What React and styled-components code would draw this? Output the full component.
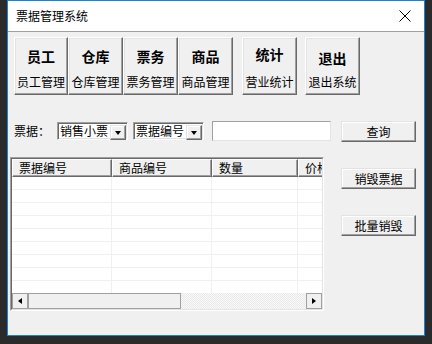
import React from 'react';
import styled, { createGlobalStyle } from 'styled-components';

const Global = createGlobalStyle`
  html, body { margin: 0; padding: 0; background: #2b2b2b; }
  body { font-family: "Noto Sans CJK SC", "Noto Sans", sans-serif; color: #000; }
  * { box-sizing: border-box; }
`;

const Window = styled.div`
  margin-left: 7px;
  width: 418px;
  height: 336px;
  border: 1px solid #1883d7;
  background: #f0f0f0;
  display: flex;
  flex-direction: column;
`;

const TitleBar = styled.div`
  height: 31px;
  flex: none;
  background: #fff;
  border-bottom: 1px solid #a0a0a0;
  display: flex;
  align-items: center;
  justify-content: space-between;
  padding: 0 13px 0 8px;
  font-size: 12px;
  line-height: 14px;
`;

const CloseIcon = styled.svg`
  width: 12px;
  height: 12px;
  display: block;
`;

const Client = styled.div`
  flex: 1;
  display: flex;
  flex-direction: column;
  padding: 5px 0 0 2px;
`;

const Toolbar = styled.div`
  display: flex;
  margin-left: 4px;
  height: 58px;
`;

const ToolButton = styled.button`
  width: ${p => p.$w || 55}px;
  height: 58px;
  margin-left: ${p => p.$ml || 0}px;
  padding: 0 0 5px;
  background: #f0f0f0;
  border: 1px solid;
  border-color: #fff #696969 #696969 #fff;
  box-shadow: inset -1px -1px #a0a0a0, inset 1px 1px #e3e3e3;
  display: flex;
  flex-direction: column;
  align-items: center;
  font-family: inherit;
  color: #000;
`;

const ToolTitle = styled.span`
  margin-top: ${p => p.$top}px;
  font-size: 14px;
  line-height: 16px;
  font-weight: 700;
`;

const ToolCaption = styled.span`
  margin-top: auto;
  font-size: 12px;
  line-height: 14px;
  white-space: nowrap;
`;

const Body = styled.div`
  display: flex;
  margin-top: 26px;
`;

const LeftCol = styled.div`
  width: 321px;
  display: flex;
  flex-direction: column;
`;

const SearchRow = styled.div`
  display: flex;
  align-items: center;
  height: 20px;
  padding-left: 4px;
`;

const Label = styled.span`
  width: 43px;
  font-size: 12px;
  line-height: 14px;
`;

const Combo = styled.div`
  width: 71px;
  height: 18px;
  margin-right: ${p => p.$mr || 0}px;
  display: flex;
  background: #fff;
  border: 1px solid;
  border-color: #a0a0a0 #fff #fff #a0a0a0;
  padding: 1px 0 0 1px;
  box-shadow: inset 1px 1px #696969, inset -1px -1px #e3e3e3;
`;

const ComboText = styled.span`
  flex: 1;
  min-width: 0;
  padding-left: 1px;
  font-size: 12px;
  line-height: 14px;
  white-space: nowrap;
`;

const DropButton = styled.span`
  width: 16px;
  height: 15px;
  flex: none;
  margin: 1px 1px 0 0;
  background: #f0f0f0;
  border: 1px solid;
  border-color: #e3e3e3 #696969 #696969 #e3e3e3;
  box-shadow: inset -1px -1px #a0a0a0, inset 1px 1px #fff;
  display: flex;
  align-items: center;
  justify-content: center;
`;

const DownTri = styled.span`
  width: 0;
  height: 0;
  border-left: 3.5px solid transparent;
  border-right: 3.5px solid transparent;
  border-top: 4px solid #000;
`;

const TextInput = styled.div`
  width: 119px;
  height: 20px;
  background: #fff;
  border: 1px solid;
  border-color: #a0a0a0 #e3e3e3 #e3e3e3 #a0a0a0;
`;

const Table = styled.div`
  margin-top: 16px;
  width: 314px;
  height: 154px;
  border: 1px solid;
  border-color: #a0a0a0 #fff #fff #a0a0a0;
`;

const TableInner = styled.div`
  height: 100%;
  border: 1px solid;
  border-color: #696969 #e3e3e3 #e3e3e3 #696969;
  display: flex;
  flex-direction: column;
  overflow: hidden;
  background: #fff;
`;

const HeaderRow = styled.div`
  display: flex;
  height: 18px;
  flex: none;
  background: #f0f0f0;
`;

const HeaderCell = styled.div`
  width: ${p => p.$w}px;
  flex: none;
  padding-left: 6px;
  font-size: 12px;
  line-height: 15px;
  white-space: nowrap;
  border-top: 1px solid #fff;
  border-left: 1px solid #fff;
  border-right: 1px solid #696969;
  border-bottom: 1px solid #696969;
  box-shadow: inset -1px -1px #a0a0a0;
`;

const Rows = styled.div`
  height: 116px;
  flex: none;
  overflow: hidden;
`;

const Row = styled.div`
  display: flex;
  height: 13px;
  border-bottom: 1px solid #f0f0f0;
`;

const Cell = styled.div`
  width: ${p => p.$w}px;
  flex: none;
  border-right: 1px solid #f0f0f0;
`;

const ScrollBar = styled.div`
  display: flex;
  height: 16px;
  flex: none;
`;

const ScrollButton = styled.div`
  width: 16px;
  height: 16px;
  background: #f0f0f0;
  border: 1px solid #a0a0a0;
  display: flex;
  align-items: center;
  justify-content: center;
`;

const Thumb = styled.div`
  width: 153px;
  background: #f0f0f0;
  border: 1px solid #a0a0a0;
`;

const Track = styled.div`
  flex: 1;
  background: repeating-conic-gradient(#fafafa 0 25%, #e8e8e8 0 50%) 0 0 / 2px 2px;
`;

const Tri = styled.span`
  width: 0;
  height: 0;
  border-top: 3.5px solid transparent;
  border-bottom: 3.5px solid transparent;
  ${p => (p.$dir === 'left' ? 'border-right: 4px solid #000;' : 'border-left: 4px solid #000;')}
`;

const RightCol = styled.div`
  margin-left: 10px;
  display: flex;
  flex-direction: column;
  gap: 26px;
`;

const PushButton = styled.button`
  width: 75px;
  height: 21px;
  padding: 0;
  background: #f0f0f0;
  border: 1px solid;
  border-color: #e3e3e3 #696969 #696969 #e3e3e3;
  box-shadow: inset -1px -1px #a0a0a0, inset 1px 1px #fff;
  font-family: inherit;
  font-size: 12px;
  line-height: 14px;
  color: #000;
`;

const tools = [
  { t: '员工', c: '员工管理', top: 10, w: 54 },
  { t: '仓库', c: '仓库管理', top: 10 },
  { t: '票务', c: '票务管理', top: 10 },
  { t: '商品', c: '商品管理', top: 10 },
  { t: '统计', c: '营业统计', top: 8, ml: 9 },
  { t: '退出', c: '退出系统', top: 12, ml: 8 },
];

const cols = [
  { name: '票据编号', w: 100 },
  { name: '商品编号', w: 100 },
  { name: '数量', w: 86 },
  { name: '价格', w: 60 },
];

export default function App() {
  return (
    <>
      <Global />
      <Window>
        <TitleBar>
          <span>票据管理系统</span>
          <CloseIcon viewBox="0 0 12 12">
            <path d="M0.5 0.5 L11.5 11.5 M11.5 0.5 L0.5 11.5" stroke="#000" strokeWidth="1" fill="none" />
          </CloseIcon>
        </TitleBar>
        <Client>
          <Toolbar>
            {tools.map(b => (
              <ToolButton key={b.t} $w={b.w} $ml={b.ml}>
                <ToolTitle $top={b.top}>{b.t}</ToolTitle>
                <ToolCaption>{b.c}</ToolCaption>
              </ToolButton>
            ))}
          </Toolbar>
          <Body>
            <LeftCol>
              <SearchRow>
                <Label>票据：</Label>
                <Combo $mr={5}>
                  <ComboText>销售小票</ComboText>
                  <DropButton><DownTri /></DropButton>
                </Combo>
                <Combo $mr={8}>
                  <ComboText>票据编号</ComboText>
                  <DropButton><DownTri /></DropButton>
                </Combo>
                <TextInput />
              </SearchRow>
              <Table>
                <TableInner>
                  <HeaderRow>
                    {cols.map(c => (
                      <HeaderCell key={c.name} $w={c.w}>{c.name}</HeaderCell>
                    ))}
                  </HeaderRow>
                  <Rows>
                    {Array.from({ length: 9 }).map((_, i) => (
                      <Row key={i}>
                        {cols.map(c => <Cell key={c.name} $w={c.w} />)}
                      </Row>
                    ))}
                  </Rows>
                  <ScrollBar>
                    <ScrollButton><Tri $dir="left" /></ScrollButton>
                    <Thumb />
                    <Track />
                    <ScrollButton><Tri $dir="right" /></ScrollButton>
                  </ScrollBar>
                </TableInner>
              </Table>
            </LeftCol>
            <RightCol>
              <PushButton>查询</PushButton>
              <PushButton>销毁票据</PushButton>
              <PushButton>批量销毁</PushButton>
            </RightCol>
          </Body>
        </Client>
      </Window>
    </>
  );
}
